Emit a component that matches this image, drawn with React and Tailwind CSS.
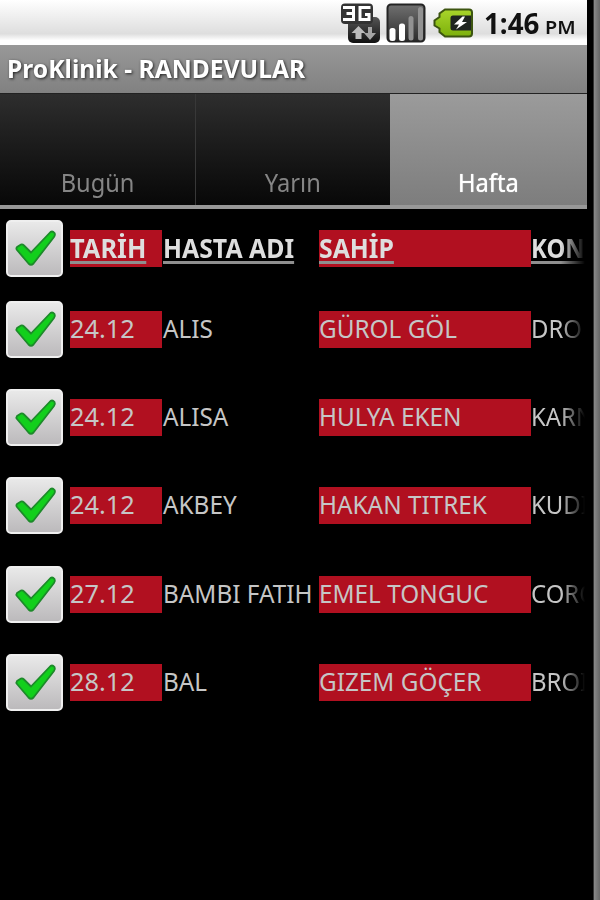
import clsx from "clsx";

const TABS = ["Bugün", "Yarın", "Hafta"];

const ROWS = [
  { date: "TARİH", patient: "HASTA ADI", owner: "SAHİP", subject: "KON", header: true },
  { date: "24.12", patient: "ALIS", owner: "GÜROL GÖL", subject: "DRO" },
  { date: "24.12", patient: "ALISA", owner: "HULYA EKEN", subject: "KARN" },
  { date: "24.12", patient: "AKBEY", owner: "HAKAN TITREK", subject: "KUDI" },
  { date: "27.12", patient: "BAMBI FATIH", owner: "EMEL TONGUC", subject: "CORO" },
  { date: "28.12", patient: "BAL", owner: "GIZEM GÖÇER", subject: "BROI" },
];

const NetworkIcon = () => (
  <svg className="h-10 w-10 shrink-0" viewBox="0 0 40 40" fill="none">
    <defs>
      <linearGradient id="network" x1="0" y1="0" x2="0" y2="1">
        <stop offset="0" stopColor="#555" />
        <stop offset="1" stopColor="#111" />
      </linearGradient>
    </defs>
    <rect x="8" y="14" width="32" height="26" rx="5" fill="url(#network)" />
    <rect x="1" y="0.500" width="32" height="20.500" rx="4" fill="#333" />
    <path d="M3 4.500H13.500V16.500H3M6.500 10.500H13.500M30.500 4.500H20V16.500H29V11.500H25" stroke="#fff" strokeWidth="3" />
    <path d="M18.500 23l7 7h-4v6h-6v-6h-4z" fill="#bcbcbc" />
    <path d="M30 37l-6-7h4v-6h4v6h4z" fill="#a5a5a5" />
  </svg>
);

const SignalIcon = () => (
  <svg className="h-10 w-10 shrink-0" viewBox="0 0 40 40">
    <defs>
      <linearGradient id="signal" x1="0" y1="0" x2="0" y2="1">
        <stop offset="0" stopColor="#707070" />
        <stop offset="1" stopColor="#2b2b2b" />
      </linearGradient>
    </defs>
    <rect x="1.500" y="1.500" width="37" height="37" rx="3.500" fill="url(#signal)" stroke="#242424" strokeWidth="2" />
    <rect x="3.500" y="25" width="6" height="13" rx="2.500" fill="#fff" />
    <rect x="13" y="20.500" width="6" height="17.500" rx="2.500" fill="#fff" />
    <rect x="22.500" y="13" width="5" height="24.500" rx="2.500" fill="#929292" />
    <rect x="32" y="4" width="5" height="33.500" rx="2.500" fill="#929292" />
  </svg>
);

const BatteryIcon = () => (
  <svg className="h-[30px] w-10 shrink-0" viewBox="0 0 40 30">
    <defs>
      <linearGradient id="battery" x1="0" y1="0" x2="0" y2="1">
        <stop offset="0" stopColor="#a9d62b" />
        <stop offset="1" stopColor="#7cb00b" />
      </linearGradient>
    </defs>
    <path
      d="M12 1.500H36Q39 1.500 39 4.500V25.500Q39 28.500 36 28.500H12L6.500 24V20.500L1.500 17.500V12.500L6.500 9V5.500Z"
      fill="url(#battery)"
      stroke="#3c5410"
      strokeWidth="2"
    />
    <path d="M20 7.500H38V22.500H20Q17.500 22.500 17.500 20V10Q17.500 7.500 20 7.500Z" fill="#1f2520" />
    <path d="M29.500 8.500L21 16.500H26L23 21.500L34 14H29L32 8.500Z" fill="#fff" />
  </svg>
);

const CheckBox = () => (
  <div className="flex h-[57px] w-[57px] shrink-0 items-center justify-center rounded-[5px] border-2 border-[#efefef] bg-linear-to-b from-[#e9e9e9] to-[#bcbabc]">
    <svg className="h-[53px] w-[53px] shrink-0" viewBox="0 0 53 53">
      <path
        d="M9 25L13 22.500Q14.500 22 16 23.500L23 30.500L42.500 10Q44.500 8.500 46.500 11Q47.500 13 46 15L25.500 41.500Q23 44 20.500 41.500L9 28Q7.800 26.500 9 25Z"
        fill="#12cf1c"
        stroke="#1d8a2a"
        strokeWidth="1.800"
        strokeLinejoin="round"
      />
    </svg>
  </div>
);

const Row = ({ date, patient, owner, subject, header }) => {
  const text = clsx(
    "inline-block origin-left whitespace-nowrap",
    header
      ? "font-bold text-[#dedede] underline decoration-[#8f8f8f] decoration-[3px] underline-offset-[3px]"
      : "-translate-y-px text-[#c6c6c6]"
  );
  const condensed = header ? "scale-x-[0.955]" : "scale-x-[0.935]";
  return (
    <div className={clsx("flex shrink-0 items-center pl-1.5 text-[26px] leading-[37px]", header ? "h-[76px] pt-0.5" : "h-[88.3px]")}>
      <CheckBox />
      <div className="ml-[7px] h-[37px] w-[92px] shrink-0 bg-[#b11020]">
        <span className={clsx(text, "scale-x-[0.975]")}>{date}</span>
      </div>
      <div className="h-[37px] w-[157px] shrink-0 pl-px">
        <span className={clsx(text, condensed)}>{patient}</span>
      </div>
      <div className="h-[37px] w-[212px] shrink-0 bg-[#b11020]">
        <span className={clsx(text, condensed)}>{owner}</span>
      </div>
      <div className="h-[37px] w-[54px] shrink-0 overflow-hidden mask-r-from-55% mask-r-to-100%">
        <span className={clsx(text, header ? "scale-x-[0.92]" : "scale-x-[0.92]")}>{subject}</span>
      </div>
    </div>
  );
};

export default function App() {
  return (
    <div className="flex h-[900px] w-[600px] overflow-hidden bg-black font-['Noto_Sans',sans-serif]">
      <div className="flex w-[587px] shrink-0 flex-col">
        {/* Status bar */}
        <div className="flex h-[45px] shrink-0 items-center justify-end bg-linear-to-b from-white via-[#dedede] via-75% to-white to-90% pr-[11px]">
          <NetworkIcon />
          <span className="w-[6px]" />
          <SignalIcon />
          <span className="w-[7px]" />
          <BatteryIcon />
          <div className="ml-[11px] flex w-[92px] items-baseline font-bold whitespace-nowrap text-[#111]">
            <span className="w-[61px] text-[28px]">
              <span className="inline-block origin-left scale-x-[0.99]">1:46</span>
            </span>
            <span className="text-[18px] font-semibold">
              <span className="inline-block origin-left scale-x-[1.1]">PM</span>
            </span>
          </div>
        </div>

        {/* Title bar */}
        <div className="flex h-[49px] shrink-0 items-center border-b border-[#222] bg-linear-to-b from-[#989898] to-[#818181] pl-[7px]">
          <h1 className="origin-left scale-x-[0.985] text-[25px] font-bold whitespace-nowrap text-white [text-shadow:1px_1px_3px_#222]">
            ProKlinik - RANDEVULAR
          </h1>
        </div>

        {/* Tabs */}
        <div className="flex h-[111px] shrink-0">
          {TABS.map((tab, i) => (
            <div
              key={tab}
              className={clsx(
                "flex items-end justify-center pb-[5px] text-[26px] leading-9",
                i === 2 && "w-[197px] bg-linear-to-b from-[#9b9b9b] to-[#7d7d7d] text-white [text-shadow:0_0_1px_#fff]",
                i === 1 && "w-[194px] bg-linear-to-b from-[#2e2e2e] to-[#080808] text-[#858585]",
                i === 0 && "w-[196px] border-r border-[#383838] bg-linear-to-b from-[#2e2e2e] to-[#080808] text-[#858585]"
              )}
            >
              <span className="inline-block scale-x-[0.91]">{tab}</span>
            </div>
          ))}
        </div>
        <div className="h-1 shrink-0 bg-[#989898]" />

        {/* Appointments */}
        {ROWS.map((row, i) => (
          <Row key={i} {...row} />
        ))}
      </div>
      <div className="ml-auto w-[7px] border-l border-[#333] bg-linear-to-r from-[#898989] to-[#666]" />
    </div>
  );
}
